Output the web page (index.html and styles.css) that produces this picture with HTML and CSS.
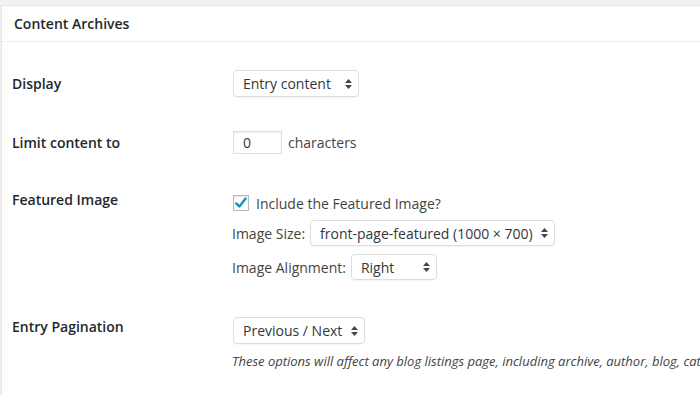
FILE: index.html
```html
<!DOCTYPE html>
<html lang="en">
<head>
  <meta charset="UTF-8">
  <title>Theme Settings - Content Archives</title>
  <link rel="stylesheet" href="styles.css">
</head>
<body>
  <div class="postbox">
    <h2 class="postbox-title">Content Archives</h2>

    <div class="postbox-inside">
      <div class="setting setting-center setting-display">
        <div class="setting-label">Display</div>
        <select class="select select-display">
          <option>Entry content</option>
        </select>
      </div>

      <div class="setting setting-center setting-limit">
        <div class="setting-label">Limit content to</div>
        <input class="text-input" type="text" value="0">
        <span class="after-input">characters</span>
      </div>

      <div class="setting setting-featured">
        <div class="setting-label label-featured">Featured Image</div>
        <div class="setting-fields">
          <label class="check-line">
            <span class="checkbox">
              <svg width="14" height="14" viewBox="0 0 14 14">
                <path d="M2.2 7.4 L5.4 10.4 L11.6 2.6" fill="none" stroke="#1e8cbe" stroke-width="2.4" stroke-linecap="round" stroke-linejoin="round"/>
              </svg>
            </span>
            Include the Featured Image?
          </label>
          <div class="field-line line-size">
            <span class="field-name">Image Size:</span>
            <select class="select select-size">
              <option>front-page-featured (1000 × 700)</option>
            </select>
          </div>
          <div class="field-line line-align">
            <span class="field-name">Image Alignment:</span>
            <select class="select select-align">
              <option>Right</option>
            </select>
          </div>
        </div>
      </div>

      <div class="setting setting-pagination">
        <div class="setting-label label-pagination">Entry Pagination</div>
        <div class="setting-fields">
          <select class="select select-pagination">
            <option>Previous / Next</option>
          </select>
          <p class="description">These options will affect any blog listings page, including archive, author, blog, category, search, and tag pages.</p>
        </div>
      </div>
    </div>
  </div>
</body>
</html>
```

FILE: styles.css
```css
* {
  margin: 0;
  padding: 0;
  box-sizing: border-box;
}

html, body {
  height: 100%;
  overflow: hidden;
}

body {
  font-family: "Open Sans", "Liberation Sans", sans-serif;
  font-size: 14px;
  color: #444;
  background: #f1f1f1;
}

.postbox {
  margin: 5px 0 0 1px;
  height: 400px;
  background: #fff;
  border-top: 1px solid #e5e5e5;
  border-left: 1px solid #e5e5e5;
  white-space: nowrap;
}

.postbox-title {
  height: 36px;
  padding-left: 12px;
  font-size: 14px;
  font-weight: 600;
  line-height: 35px;
  color: #23282d;
  border-bottom: 1px solid #eee;
}

.postbox-inside {
  padding-left: 10px;
}

.setting {
  display: flex;
}

.setting-center {
  align-items: center;
}

.setting-label {
  width: 221px;
  flex-shrink: 0;
  font-weight: 600;
  color: #23282d;
}

.setting-display {
  margin-top: 28px;
  height: 27px;
}

.setting-limit {
  margin-top: 34px;
  height: 23px;
}

.setting-featured {
  margin-top: 39px;
}

.label-featured {
  line-height: 14px;
}

.setting-pagination {
  margin-top: 37px;
}

.label-pagination {
  line-height: 20px;
}

.select {
  -webkit-appearance: none;
  appearance: none;
  height: 27px;
  padding: 0 20px 0 9px;
  font-family: inherit;
  font-size: 14px;
  color: #32373c;
  background-color: #fff;
  background-image: url("data:image/svg+xml,%3Csvg xmlns='http://www.w3.org/2000/svg' width='7' height='10'%3E%3Cpath d='M3.5 0 L7 4 L0 4 Z M0 6 L7 6 L3.5 10 Z' fill='%23444'/%3E%3C/svg%3E");
  background-repeat: no-repeat;
  background-position: right 6px center;
  border: 1px solid #ddd;
  border-radius: 4px;
  box-shadow: 0 1px 1px rgba(0, 0, 0, 0.04);
}

.select-display {
  width: 126px;
}

.select-size {
  width: 245px;
  height: 26px;
}

.select-align {
  width: 86px;
  height: 26px;
}

.select-pagination {
  width: 132px;
}

.text-input {
  width: 49px;
  height: 23px;
  padding: 0 9px;
  font-family: inherit;
  font-size: 14px;
  color: #32373c;
  border: 1px solid #ddd;
  box-shadow: inset 0 1px 2px rgba(0, 0, 0, 0.07);
  outline: none;
}

.after-input {
  margin-left: 6px;
}

.setting-fields {
  display: flex;
  flex-direction: column;
  align-items: flex-start;
}

.check-line {
  display: flex;
  align-items: center;
  height: 20px;
  gap: 7px;
}

.checkbox {
  display: flex;
  align-items: center;
  justify-content: center;
  width: 16px;
  height: 16px;
  border: 1px solid #b4b9be;
  box-shadow: inset 0 1px 2px rgba(0, 0, 0, 0.1);
}

.field-line {
  display: flex;
  align-items: center;
  gap: 5px;
  margin-left: -1px;
}

.line-size {
  margin-top: 7px;
}

.line-align {
  margin-top: 8px;
}

.description {
  margin-top: 8px;
  margin-left: -1px;
  font-size: 13px;
  font-style: italic;
  line-height: 18px;
}
```
